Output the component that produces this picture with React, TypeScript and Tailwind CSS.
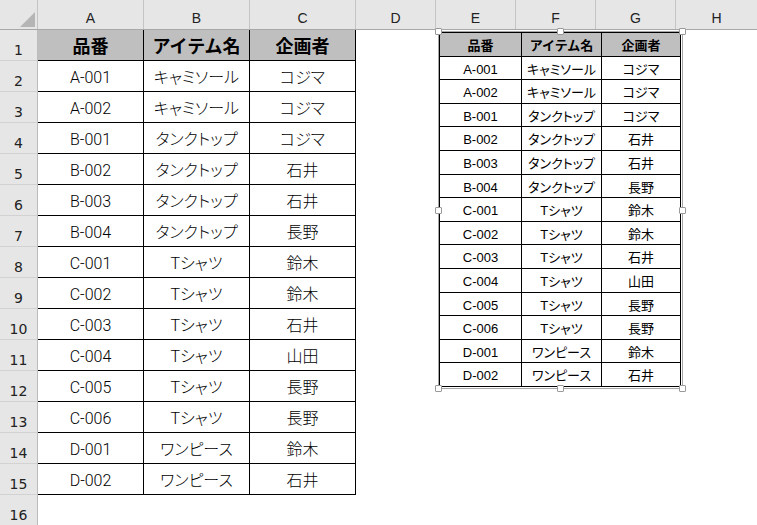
import React from "react";

const data: [string, string, string][] = [
  ["A-001", "キャミソール", "コジマ"],
  ["A-002", "キャミソール", "コジマ"],
  ["B-001", "タンクトップ", "コジマ"],
  ["B-002", "タンクトップ", "石井"],
  ["B-003", "タンクトップ", "石井"],
  ["B-004", "タンクトップ", "長野"],
  ["C-001", "Tシャツ", "鈴木"],
  ["C-002", "Tシャツ", "鈴木"],
  ["C-003", "Tシャツ", "石井"],
  ["C-004", "Tシャツ", "山田"],
  ["C-005", "Tシャツ", "長野"],
  ["C-006", "Tシャツ", "長野"],
  ["D-001", "ワンピース", "鈴木"],
  ["D-002", "ワンピース", "石井"],
];

const cols: { l: string; w: string }[] = [
  { l: "A", w: "w-[106px]" },
  { l: "B", w: "w-[106px]" },
  { l: "C", w: "w-[106px]" },
  { l: "D", w: "w-[80px]" },
  { l: "E", w: "w-[80px]" },
  { l: "F", w: "w-[80px]" },
  { l: "G", w: "w-[80px]" },
  { l: "H", w: "w-[81px]" },
];

const embedHeights = [
  "h-[24px]", "h-[23px]", "h-[24px]", "h-[23px]", "h-[24px]",
  "h-[24px]", "h-[23px]", "h-[24px]", "h-[23px]", "h-[24px]",
  "h-[24px]", "h-[23px]", "h-[24px]", "h-[23px]", "h-[24px]",
];

const bigCellFont =
  "font-['Roboto','Noto_Sans_CJK_JP',sans-serif] [font-feature-settings:'palt'] font-light";
const smallCellFont =
  "font-['Liberation_Sans','Noto_Sans_CJK_JP',sans-serif] [font-feature-settings:'palt']";

function RowHeader({ n, last }: { n: number; last?: boolean }) {
  return (
    <div
      className={`w-[38px] shrink-0 bg-[#e6e6e6] border-r border-r-[#bcbcbc] ${
        last ? "" : "border-b border-b-[#d2d2d2]"
      } flex items-end justify-center pb-[3px] font-['DejaVu_Sans',sans-serif] text-[14px] leading-none text-[#222]`}
    >
      {n}
    </div>
  );
}

function Handle({ pos }: { pos: string }) {
  return (
    <div
      className={`absolute ${pos} w-[7px] h-[7px] bg-white border border-[#9a9a9a] rounded-[1px]`}
    />
  );
}

export default function App() {
  return (
    <div className="relative w-[757px] h-[525px] overflow-hidden bg-white">
      {/* column headers */}
      <div className="flex h-[30px] bg-[#e6e6e6] border-b border-b-[#a8a8a8]">
        <div className="relative w-[38px] shrink-0 border-r border-r-[#c4c4c4]">
          <svg
            className="absolute left-[20px] top-[12px]"
            width="15"
            height="15"
            viewBox="0 0 15 15"
          >
            <polygon points="15,0 15,15 0,15" fill="#b5b5b5" />
          </svg>
        </div>
        {cols.map((c, i) => (
          <div
            key={c.l}
            className={`${c.w} shrink-0 ${
              i < cols.length - 1 ? "border-r border-r-[#c4c4c4]" : ""
            } flex items-center justify-center pt-[7px] font-['Liberation_Sans',sans-serif] text-[14px] leading-none text-[#222]`}
          >
            {c.l}
          </div>
        ))}
      </div>

      {/* row 1: table header */}
      <div className="flex h-[31px]">
        <RowHeader n={1} />
        {["品番", "アイテム名", "企画者"].map((t) => (
          <div
            key={t}
            className={`w-[106px] shrink-0 bg-[#bfbfbf] border-r border-b border-black flex items-center justify-center font-['Noto_Sans_CJK_JP',sans-serif] font-bold text-[18px] leading-none text-black`}
          >
            {t}
          </div>
        ))}
        <div className="flex-1 bg-white" />
      </div>

      {/* data rows */}
      {data.map((r, i) => (
        <div key={i} className="flex h-[31px]">
          <RowHeader n={i + 2} />
          {r.map((t, j) => (
            <div
              key={j}
              className={`w-[106px] shrink-0 bg-white border-r border-b border-black flex items-center justify-center pt-[3px] ${bigCellFont} text-[16px] leading-none text-black`}
            >
              {t}
            </div>
          ))}
          <div className="flex-1 bg-white" />
        </div>
      ))}

      {/* row 16 */}
      <div className="flex h-[30px]">
        <RowHeader n={16} last />
        <div className="flex-1 bg-white" />
      </div>

      {/* floating linked picture */}
      <div className="absolute left-[438px] top-[31px] w-[245px] h-[358px] border border-[#a6a6a6] bg-white">
        <div className="w-[242px] border-l border-t border-black">
          {[["品番", "アイテム名", "企画者"] as [string, string, string], ...data].map(
            (r, i) => (
              <div key={i} className={`flex ${embedHeights[i]}`}>
                {r.map((t, j) => (
                  <div
                    key={j}
                    className={`${
                      j === 0 ? "w-[82px]" : j === 1 ? "w-[80px]" : "w-[79px]"
                    } shrink-0 border-r border-b border-black flex items-center justify-center ${
                      i === 0
                        ? "bg-[#bfbfbf] font-bold font-['Noto_Sans_CJK_JP',sans-serif] text-[13px]"
                        : `bg-white pt-[2px] ${smallCellFont} text-[13px]`
                    } leading-none text-black`}
                  >
                    {t}
                  </div>
                ))}
              </div>
            )
          )}
        </div>
        <Handle pos="left-[-4px] top-[-4px]" />
        <Handle pos="left-[118px] top-[-4px]" />
        <Handle pos="left-[240px] top-[-4px]" />
        <Handle pos="left-[-4px] top-[175px]" />
        <Handle pos="left-[240px] top-[175px]" />
        <Handle pos="left-[-4px] top-[353px]" />
        <Handle pos="left-[118px] top-[353px]" />
        <Handle pos="left-[240px] top-[353px]" />
      </div>
    </div>
  );
}
